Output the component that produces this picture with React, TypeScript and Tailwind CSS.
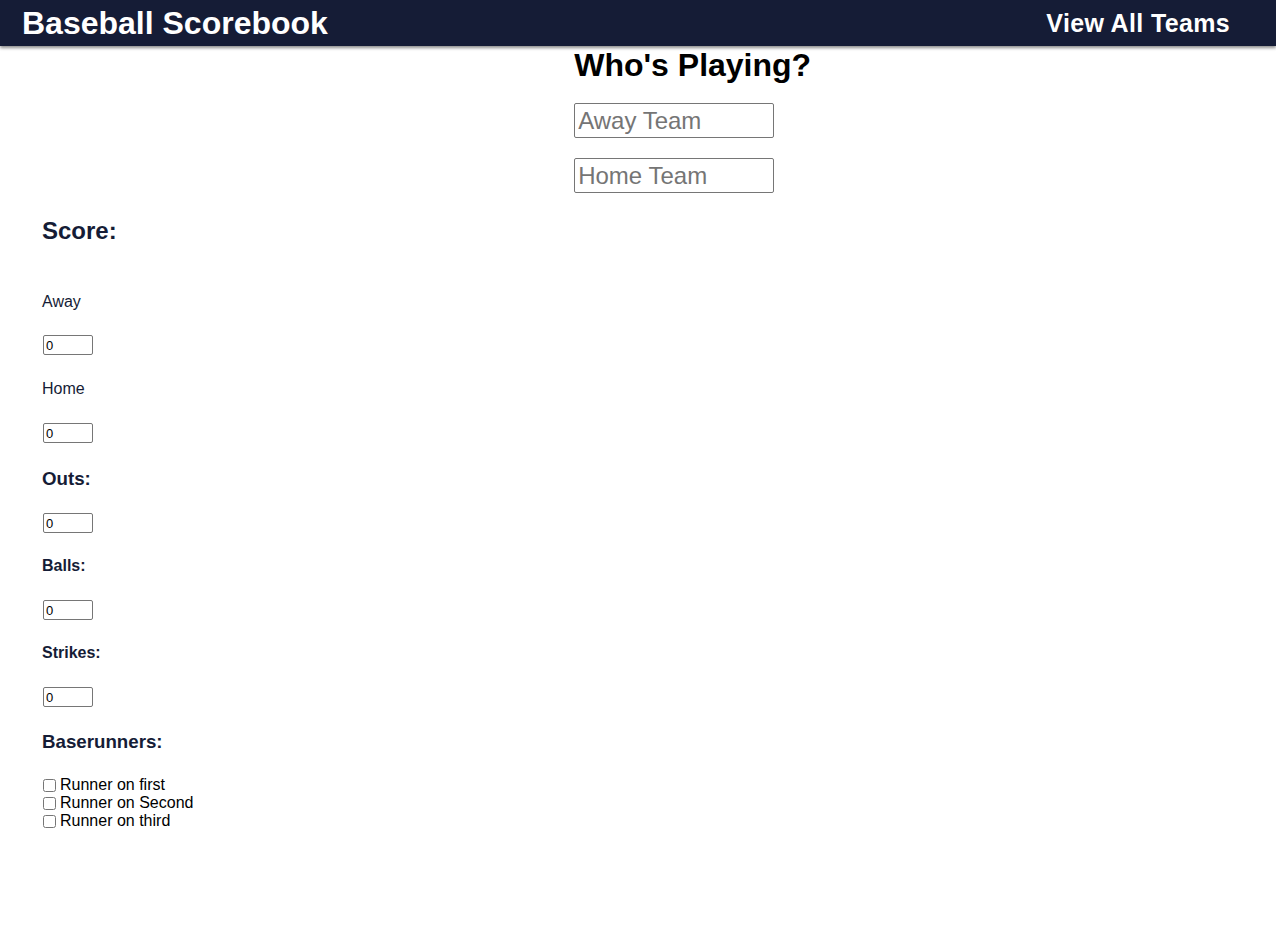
import React from "react";

const F = { fontFamily: '"Liberation Sans", Arial, Helvetica, sans-serif' };

function SmallInput() {
  return (
    <input
      type="number"
      defaultValue={0}
      className="block ml-px w-[50px] h-[20px] border border-[#767676] rounded-[2px] px-[2px] text-[13px] leading-[16px] text-black bg-white [appearance:textfield] [&::-webkit-inner-spin-button]:appearance-none"
    />
  );
}

export default function App() {
  return (
    <div style={F} className="min-h-[940px] bg-white text-black">
      <header className="h-[46px] bg-[#151c36] flex items-center justify-between pl-[22px] pr-[46px] shadow-[0_2px_3px_rgba(0,0,0,0.45)] relative z-10">
        <h1 className="text-white font-bold text-[32px] leading-[36px]">Baseball Scorebook</h1>
        <a className="text-white font-bold text-[25px] leading-[30px] tracking-[0.35px] cursor-pointer">View All Teams</a>
      </header>

      <section className="ml-[45%]">
        <h1 className="text-[32px] font-bold leading-[39px]">Who's Playing?</h1>
        <input
          placeholder="Away Team"
          className="block mt-[18px] w-[200px] h-[35px] border border-[#767676] rounded-[2px] px-[3px] text-[24px] placeholder:text-[#757575]"
        />
        <input
          placeholder="Home Team"
          className="block mt-[20px] w-[200px] h-[35px] border border-[#767676] rounded-[2px] px-[3px] text-[24px] placeholder:text-[#757575]"
        />
      </section>

      <section className="pl-[42px] text-[#151c36]">
        <h2 className="mt-[24px] text-[24px] font-bold leading-[28px]">Score:</h2>
        <p className="mt-[48px] text-[16px] leading-[18px]">Away</p>
        <div className="mt-[24px]"><SmallInput /></div>
        <p className="mt-[25px] text-[16px] leading-[18px]">Home</p>
        <div className="mt-[25px]"><SmallInput /></div>
        <h3 className="mt-[25px] text-[18.72px] font-bold leading-[22px]">Outs:</h3>
        <div className="mt-[23px]"><SmallInput /></div>
        <h4 className="mt-[24px] text-[16px] font-bold leading-[18px]">Balls:</h4>
        <div className="mt-[25px]"><SmallInput /></div>
        <h4 className="mt-[24px] text-[16px] font-bold leading-[18px]">Strikes:</h4>
        <div className="mt-[25px]"><SmallInput /></div>
        <h3 className="mt-[24px] text-[18.72px] font-bold leading-[22px]">Baserunners:</h3>
        <div className="mt-[23px] text-black text-[16px] leading-[18px]">
          {["Runner on first", "Runner on Second", "Runner on third"].map((t) => (
            <label key={t} className="flex items-center">
              <input type="checkbox" className="ml-px mr-[4px] w-[13px] h-[13px]" />
              {t}
            </label>
          ))}
        </div>
      </section>
    </div>
  );
}
